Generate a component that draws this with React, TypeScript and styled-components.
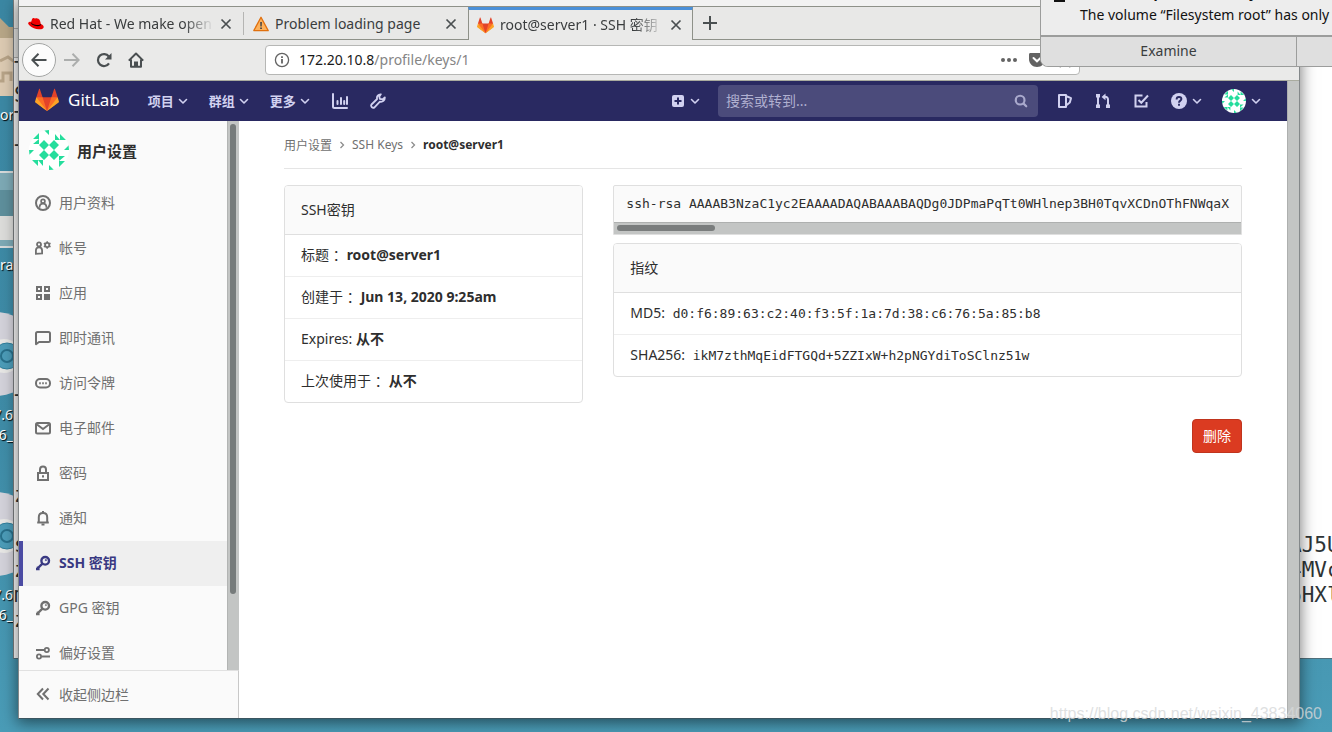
import React from "react";
import styled, { createGlobalStyle, css } from "styled-components";

const sans = `"Noto Sans", "Noto Sans CJK SC", sans-serif`;
const mono = `"DejaVu Sans Mono", monospace`;

const GlobalStyle = createGlobalStyle`
  *, *::before, *::after { box-sizing: border-box; }
  body { margin: 0; font-family: ${sans}; font-size: 14px; color: #2e2e2e; }
  button, input { font: inherit; color: inherit; margin: 0; padding: 0; border: 0; background: none; }
  a { color: inherit; text-decoration: none; }
  ul, ol, p { margin: 0; padding: 0; list-style: none; }
  svg { display: block; flex: none; }
`;

/* ---------- desktop ---------- */

const Desktop = styled.div`
  position: relative;
  height: 100vh;
  min-height: 600px;
  overflow: hidden;
  background: linear-gradient(#3b87a3, #3f8ca7 60%, #4a9cb7);
`;

const DesktopIcons = styled.ul`
  width: 13px;
  padding-top: 14px;
  overflow: hidden;
  color: #fff;
  font-size: 14px;
  line-height: 20px;
  text-shadow: 1px 1px 1px #000;
`;

const DesktopIcon = styled.li<{ $gap: number; $end?: boolean }>`
  display: flex;
  flex-direction: column;
  align-items: ${(p) => (p.$end ? "flex-end" : "flex-start")};
  height: ${(p) => p.$gap}px;
  text-align: right;
  white-space: pre;
`;

const Terminal = styled.section`
  position: absolute;
  top: 0;
  left: 13px;
  right: 0;
  bottom: 73px;
  overflow: hidden;
  background: #fff;
  border-left: 1px solid #7d8082;
  border-bottom: 1px solid #50707c;
  font-family: ${mono};
  font-size: 21px;
  line-height: 25px;
  color: #2e3436;
`;

const TerminalBar = styled.div`
  height: 29px;
  background: #ececea;
  border-bottom: 1px solid #b4b4b2;
`;

const TerminalRow = styled.div`
  display: flex;
  justify-content: space-between;
  height: 25px;
  white-space: pre;
`;

const TerminalEnd = styled.span`
  width: 43px;
  overflow: hidden;
`;

/* ---------- browser window ---------- */

const BrowserWindow = styled.section`
  position: absolute;
  top: 0;
  left: 18px;
  right: 32px;
  bottom: 13px;
  display: flex;
  flex-direction: column;
  background: #fff;
  border: 1px solid #84888a;
  border-top: 0;
  border-bottom-color: #3b5560;
  box-shadow: 0 3px 14px 1px rgba(0, 0, 0, 0.5);
`;

const TitleBar = styled.div`
  height: 7px;
  flex: none;
  background: #f2f2f2;
  border-bottom: 1px solid #8e9189;
`;

const TabBar = styled.div`
  display: flex;
  flex: none;
  height: 33px;
  background: #e8e8e7;
`;

const Tab = styled.div<{ $active?: boolean; $divider?: boolean }>`
  display: flex;
  align-items: center;
  gap: 6px;
  width: 225px;
  padding: 2px 12px 0 9px;
  color: #3a3d3e;
  border-bottom: 1px solid #8e9189;
  ${(p) =>
    p.$divider &&
    css`
      background: linear-gradient(#b5b5b3, #b5b5b3) right center / 1px 23px no-repeat;
    `}
  ${(p) =>
    p.$active &&
    css`
      margin-left: -1px;
      background: #eaeae9;
      border: 1px solid #8e9189;
      border-top: 3px solid #4a90d9;
      border-bottom: 0;
      padding: 0 10px 0 8px;
    `}
`;

const TabTitle = styled.span`
  flex: 1;
  overflow: hidden;
  white-space: nowrap;
  line-height: 22px;
  mask-image: linear-gradient(to right, #000 calc(100% - 30px), transparent);
`;

const TabTitlePlain = styled(TabTitle)`
  mask-image: none;
`;

const IconButton = styled.button`
  display: flex;
  align-items: center;
  justify-content: center;
  cursor: pointer;
  color: #4a4f51;
`;

const TabRest = styled.div`
  display: flex;
  flex: 1;
  padding-left: 9px;
  border-bottom: 1px solid #8e9189;
`;

const Toolbar = styled.div`
  display: flex;
  flex: none;
  align-items: center;
  height: 41px;
  padding: 0 219px 0 3px;
  background: #eaeae9;
  border-bottom: 1px solid #a9ab9f;
`;

const NavButtons = styled.div`
  display: flex;
  flex: 0 0 243px;
  align-items: center;
`;

const BackButton = styled(IconButton)`
  width: 34px;
  height: 34px;
  border: 1px solid #a3a5a4;
  border-radius: 17px;
  background: #fcfcfc;
`;

const NavButton = styled(IconButton)<{ $faded?: boolean }>`
  width: 32px;
  height: 32px;
  color: ${(p) => (p.$faded ? "#acaead" : "#4a4f51")};
`;

const AddressBar = styled.div`
  display: flex;
  flex: 1;
  align-items: center;
  height: 30px;
  padding: 0 6px 0 8px;
  background: #fff;
  border: 1px solid #b6b7b5;
  border-radius: 4px;
  color: #636363;
`;

const Host = styled.label`
  margin-left: 9px;
  padding-bottom: 2px;
  color: #1a1a1a;
`;

const PathInput = styled.input`
  flex: 1;
  min-width: 0;
  padding-bottom: 2px;
  color: #858585;
  outline: 0;
`;

const AddressActions = styled.div`
  display: flex;
  gap: 12px;
  align-items: center;
`;

/* ---------- GitLab page ---------- */

const Viewport = styled.div`
  display: flex;
  flex: 1;
  min-height: 0;
`;

const PageScrollbar = styled.div`
  flex: 0 0 12px;
  background: #c3c5c4;
  border-left: 1px solid #aeb0af;
`;

const Page = styled.div`
  display: flex;
  flex: 1;
  flex-direction: column;
  min-width: 0;
`;

const Navbar = styled.header`
  display: flex;
  flex: none;
  align-items: center;
  height: 40px;
  padding: 0 23px 0 16px;
  background: #292961;
  color: #d1d1f0;
`;

const Brand = styled.a`
  display: flex;
  align-items: center;
  gap: 9px;
  padding-bottom: 2px;
  color: #fff;
  font-size: 17px;
  line-height: 24px;
`;

const MainMenu = styled.nav`
  display: flex;
  flex: 1;
  align-items: center;
  margin-left: 28px;
`;

const MenuButton = styled.button`
  display: flex;
  align-items: center;
  gap: 1px;
  margin-right: 18px;
  font-size: 13px;
  font-weight: 700;
  line-height: 20px;
  white-space: nowrap;
  cursor: pointer;
`;

const MenuLink = styled.a`
  margin: 0 21px 0 1px;
`;

const SearchBox = styled.form`
  display: flex;
  align-items: center;
  width: 320px;
  height: 32px;
  margin-right: 19px;
  padding: 0 10px 0 8px;
  background: #4b4b7b;
  border-radius: 4px;
  color: #a9a9cc;
`;

const SearchInput = styled.input`
  flex: 1;
  min-width: 0;
  padding-bottom: 2px;
  outline: 0;
  &::placeholder {
    color: #b0b0d0;
    opacity: 1;
  }
`;

const ActionLinks = styled.div`
  display: flex;
  align-items: center;
  gap: 17px;
`;

const ActionLink = styled.a`
  margin-right: 5px;
`;

const DropButton = styled.button<{ $end?: number }>`
  display: flex;
  align-items: center;
  gap: 2px;
  margin-right: ${(p) => p.$end ?? 0}px;
  cursor: pointer;
`;

const Avatar = styled.span<{ $size: number }>`
  display: block;
  width: ${(p) => p.$size}px;
  height: ${(p) => p.$size}px;
  overflow: hidden;
  border-radius: 50%;
  background: #fff;
  flex: none;
`;

const Body = styled.div`
  display: flex;
  flex: 1;
  min-height: 0;
`;

const Sidebar = styled.aside`
  display: flex;
  flex: 0 0 220px;
  flex-direction: column;
  background: #fafafa;
  color: #707070;
`;

const SidebarScroll = styled.div`
  display: flex;
  flex: 1;
  min-height: 0;
`;

const SidebarList = styled.div`
  flex: 1;
  overflow: hidden;
`;

const SidebarTrack = styled.div`
  flex: 0 0 12px;
  padding: 3px 2px 0;
  background: #c3c5c4;
  border-left: 1px solid #b2b4b3;
`;

const SidebarThumb = styled.div`
  width: 6px;
  height: 86%;
  background: #767b7b;
  border-radius: 3px;
`;

const ContextTitle = styled.a`
  display: flex;
  align-items: center;
  gap: 8px;
  height: 60px;
  padding: 0 0 2px 10px;
  font-size: 15px;
  font-weight: 700;
  color: #2e2e2e;
`;

const SideLink = styled.a<{ $active?: boolean }>`
  display: flex;
  align-items: center;
  gap: 8px;
  height: 45px;
  padding: 0 0 2px 16px;
  line-height: 20px;
  ${(p) =>
    p.$active &&
    css`
      padding-left: 12px;
      border-left: 4px solid #4b4ba3;
      background: #efefef;
      color: #393982;
      font-weight: 700;
    `}
`;

const CollapseButton = styled.button`
  display: flex;
  flex: none;
  align-items: center;
  gap: 8px;
  height: 48px;
  padding: 0 0 2px 16px;
  border-top: 1px solid #e1e1e1;
  border-right: 1px solid #c8c8c8;
  cursor: pointer;
`;

const Content = styled.main`
  flex: 1;
  min-width: 0;
  overflow: hidden;
`;

const Container = styled.div`
  max-width: 990px;
  margin: 0 auto;
  padding: 0 16px;
`;

const Breadcrumbs = styled.ol`
  display: flex;
  align-items: center;
  gap: 6px;
  height: 48px;
  border-bottom: 1px solid #e5e5e5;
  font-size: 12px;
  color: #707070;
`;

const Crumb = styled.li<{ $current?: boolean }>`
  display: flex;
  align-items: center;
  gap: 6px;
  ${(p) =>
    p.$current &&
    css`
      color: #2e2e2e;
      font-weight: 700;
    `}
`;

const Columns = styled.div`
  display: grid;
  grid-template-columns: repeat(12, minmax(0, 1fr));
  gap: 30px;
  align-items: start;
  margin-top: 16px;
`;

const Column = styled.div<{ $span: number }>`
  display: flex;
  flex-direction: column;
  grid-column: span ${(p) => p.$span};
`;

const Card = styled.section`
  border: 1px solid #dfdfdf;
  border-radius: 4px;
  overflow: hidden;
  line-height: 21px;
`;

const CardHeader = styled.div`
  padding: 13px 16px 14px;
  background: #fafafa;
  border-bottom: 1px solid #dfdfdf;
`;

const CardRow = styled.li`
  padding: 9px 16px 11px;
  border-bottom: 1px solid #eee;
  white-space: pre;
  &:last-child {
    border-bottom: 0;
  }
`;

const Code = styled.code`
  margin-left: 4px;
  font-family: ${mono};
  font-size: 13px;
  line-height: 16px;
`;

const KeyBox = styled.div`
  margin-bottom: 8px;
  background: #fafafa;
  border: 1px solid #dfdfdf;
  border-radius: 2px 2px 0 0;
  overflow: hidden;
`;

const KeyText = styled.pre`
  margin: 0;
  padding: 8px 0 8px 12px;
  overflow: hidden;
  font-family: ${mono};
  font-size: 13px;
  line-height: 20px;
`;

const KeyTrack = styled.div`
  height: 12px;
  padding: 2px 3px;
  background: #c3c5c4;
  border-top: 1px solid #aeb0af;
`;

const KeyThumb = styled.div`
  width: 98px;
  height: 6px;
  border-radius: 3px;
  background: #7a7d7d;
`;

const DeleteButton = styled.button`
  align-self: flex-end;
  height: 34px;
  margin-top: 42px;
  padding: 0 10px 2px;
  background: #db3b21;
  border: 1px solid #c0341d;
  border-radius: 4px;
  color: #fff;
  cursor: pointer;
`;

/* ---------- overlays ---------- */

const Notification = styled.aside`
  position: absolute;
  top: -24px;
  right: 0;
  width: 292px;
  overflow: hidden;
  background: #ededed;
  border: 1px solid #9c9d9c;
  border-right: 0;
  border-radius: 0 0 0 8px;
  color: #111;
  white-space: nowrap;
`;

const NotificationBody = styled.div`
  display: flex;
  gap: 15px;
  height: 60px;
  padding: 5px 0 0 13px;
  border-bottom: 2px solid #9c9d9c;
  line-height: 22px;
`;

const NotificationTitle = styled.p`
  font-weight: 700;
`;

const NotificationButtons = styled.div`
  display: flex;
  height: 29px;
  background: #dfdfdf;
`;

const NotificationButton = styled.button`
  width: 256px;
  padding-bottom: 2px;
  border-right: 1px solid #9c9d9c;
  color: #3a3d3e;
`;

const Watermark = styled.p`
  position: absolute;
  right: 10px;
  bottom: 8px;
  font-family: "Liberation Sans", sans-serif;
  font-size: 16px;
  line-height: 20px;
  color: rgba(214, 216, 217, 0.8);
`;

/* ---------- drawings ---------- */

const Tanuki = ({ size }: { size: number }) => (
  <svg width={size} height={size} viewBox="0 0 36 36" aria-hidden="true">
    <path fill="#e24329" d="M2 14l9.38 9v-9l-4-12.28c-.205-.632-1.176-.632-1.38 0z" />
    <path fill="#e24329" d="M34 14l-9.38 9v-9l4-12.28c.205-.632 1.176-.632 1.38 0z" />
    <path fill="#e24329" d="M18 34.38L3 14h30z" />
    <path fill="#fc6d26" d="M18 34.38L11.38 14H2l4 11z" />
    <path fill="#fc6d26" d="M18 34.38L24.62 14H34l-4 11z" />
    <path fill="#fca326" d="M2 14L.1 20.16c-.18.565 0 1.2.5 1.56L18 34.38z" />
    <path fill="#fca326" d="M34 14l1.9 6.16c.18.565 0 1.2-.5 1.56L18 34.38z" />
  </svg>
);

const Identicon = ({ size }: { size: number }) => (
  <Avatar $size={size}>
    <svg width={size} height={size} viewBox="0 0 40 40" fill="#25dd9c" aria-hidden="true">
      <path d="M15 10l5 5-5 5-5-5zM25 10l5 5-5 5-5-5zM15 20l5 5-5 5-5-5zM25 20l5 5-5 5-5-5z" />
      {[0, 90, 180, 270].map((a) => (
        <path key={a} transform={`rotate(${a} 20 20)`} d="M15 0h5v5zM10 3v6H4zM10 9v5H4z" />
      ))}
    </svg>
  </Avatar>
);

const Chevron = () => (
  <svg width="16" height="16" viewBox="0 0 16 16" fill="none" stroke="currentColor" strokeWidth="1.6" strokeLinecap="round" strokeLinejoin="round" aria-hidden="true">
    <path d="M4.5 6.5L8 10l3.5-3.5" />
  </svg>
);

const Close = () => (
  <svg width="12" height="12" viewBox="0 0 12 12" fill="none" stroke="currentColor" strokeWidth="1.7" aria-hidden="true">
    <path d="M1.5 1.5l9 9M10.5 1.5l-9 9" />
  </svg>
);

const Sep = () => (
  <svg width="8" height="8" viewBox="0 0 8 8" fill="none" stroke="#8c8c8c" strokeWidth="1.3" aria-hidden="true">
    <path d="M2.5 1L5.5 4l-3 3" />
  </svg>
);

const RedHat = () => (
  <svg width="16" height="16" viewBox="0 0 16 16" aria-hidden="true">
    <path fill="#e00" d="M4 3.2c.5-1.2 1.6-1.3 2.6-.8 1 .3 1.5-.3 2.7 0 1.7.3 2.6 1.300 3 3.300l.5 2.300c1.6.6 2.9 1.7 2.9 3 0 1.8-2.300 2.600-5 2.300-3.200-.4-6.500-1.800-8.600-3.400C.6 8.800 0 7.800.2 7c.2-.9 1.400-1.400 3-1.300z" />
    <path d="M3.200 5.700c-.4 1.200 1.300 2.300 3.900 3 2.400.6 4.700.5 5.500-.7l.3 1.100c-.9 1.300-3.500 1.300-6.100.6C4 8.900 2.500 7.500 3.200 5.700z" />
  </svg>
);

const Warning = () => (
  <svg width="16" height="16" viewBox="0 0 16 16" aria-hidden="true">
    <path fill="#fdb25c" stroke="#e0700f" strokeWidth="1.3" strokeLinejoin="round" d="M8 1.200L15.200 14.600H.8z" />
    <path fill="#444" d="M7.200 6h1.700l-.2 4.600H7.400zM7.200 11.400h1.700v1.600H7.200z" />
  </svg>
);

const Line = ({ children, size = 16, width = 2 }: { children: React.ReactNode; size?: number; width?: number }) => (
  <svg width={size} height={size} viewBox="0 0 16 16" fill="none" stroke="currentColor" strokeWidth={width} aria-hidden="true">
    {children}
  </svg>
);

const KeyIcon = () => (
  <Line width={2.4}>
    <circle cx="10.2" cy="5.8" r="3.8" />
    <path d="M7.400 8.600L2 14M3 11.600v3.200M1 14h3.600" />
    <circle cx="10.900" cy="5.100" r=".6" strokeWidth="1" />
  </Line>
);

const sideItems: { label: string; icon: React.ReactNode; active?: boolean }[] = [
  {
    label: "用户资料",
    icon: (
      <Line>
        <circle cx="8" cy="8" r="7" />
        <circle cx="8" cy="6.3" r="1.9" strokeWidth="1.7" />
        <path strokeWidth="1.7" d="M4.600 12.800V12c0-2 1.500-3.400 3.400-3.400s3.400 1.400 3.400 3.400v.8" />
      </Line>
    ),
  },
  {
    label: "帐号",
    icon: (
      <Line width={1.8}>
        <circle cx="4" cy="4.4" r="2" />
        <path d="M.9 13.800V10.600C.9 8.600 2 7.300 4 7.300s3.100 1.300 3.100 3.300v2.900z" />
        <circle cx="12.2" cy="5" r="2.1" />
        <path strokeWidth="1.5" d="M12.200 1.200v1.700M12.200 7.100v1.700M8.900 3.100l1.500.9M14 6l1.500.9M8.900 6.900l1.500-.9M14 4l1.500-.9" />
      </Line>
    ),
  },
  {
    label: "应用",
    icon: (
      <Line>
        <path d="M2 2h4v4H2zM10 2h4v4h-4zM2 10h4v4H2z" />
        <path fill="currentColor" d="M10 10h4v4h-4z" />
      </Line>
    ),
  },
  {
    label: "即时通讯",
    icon: (
      <Line>
        <path strokeLinejoin="round" d="M1 14.200V3.500C1 2.600 1.600 2 2.500 2h11c.9 0 1.500.6 1.500 1.500v7c0 .9-.6 1.500-1.500 1.500H4z" />
      </Line>
    ),
  },
  {
    label: "访问令牌",
    icon: (
      <Line>
        <rect x="1" y="4" width="14" height="8.500" rx="4" />
        <path d="M4.200 8.200h1.600M7.200 8.200h1.600M10.200 8.200h1.600" />
      </Line>
    ),
  },
  {
    label: "电子邮件",
    icon: (
      <Line>
        <rect x="1" y="3" width="14" height="10.500" rx="1.500" />
        <path d="M2 4.500l6 4.500 6-4.500" />
      </Line>
    ),
  },
  {
    label: "密码",
    icon: (
      <Line>
        <rect x="3" y="8" width="10" height="7" />
        <path d="M5 8V4.500C5 2.600 6.200 1.500 8 1.500s3 1.100 3 3V8" />
        <path d="M8 10.200v2.200" />
      </Line>
    ),
  },
  {
    label: "通知",
    icon: (
      <Line>
        <path strokeLinejoin="round" d="M2.200 12.500h11.600M3.800 12V7.200C3.800 4.600 5.500 3 8 3s4.200 1.600 4.200 4.200V12" />
        <path d="M8 1v2M6.500 14.400h3" />
      </Line>
    ),
  },
  { label: "SSH 密钥", icon: <KeyIcon />, active: true },
  { label: "GPG 密钥", icon: <KeyIcon /> },
  {
    label: "偏好设置",
    icon: (
      <Line width={1.8}>
        <path d="M1 5h8M6.500 11.500H15" />
        <circle cx="11.800" cy="5" r="2.100" />
        <circle cx="4" cy="11.500" r="2.100" />
      </Line>
    ),
  },
];

const keyDetails = [
  { label: "标题 ：", value: "root@server1" },
  { label: "创建于 ：", value: "Jun 13, 2020 9:25am" },
  { label: "Expires: ", value: "从不" },
  { label: "上次使用于 ：", value: "从不" },
];

const fingerprints = [
  { label: "MD5: ", value: "d0:f6:89:63:c2:40:f3:5f:1a:7d:38:c6:76:5a:85:b8" },
  { label: "SHA256: ", value: "ikM7zthMqEidFTGQd+5ZZIxW+h2pNGYdiToSClnz51w" },
];

const terminalRows: [string, string?][] = [
  ["T"], ["S"], ["T"], ["+"], [""], [""], [""], [""], [""], [""], [""], [""], [""], ["+"],
  [""], [""], [""], ["z"], [""], ["s", "AJ5U"], ["z", "4MVc"], ["m", "6HXl"], ["z"],
];

const Folder = () => (
  <svg width="16" height="91" viewBox="0 0 16 91" aria-hidden="true">
    <path fill="#b7a687" d="M0 4l9 9h7v20H0z" />
    <path fill="#dccab2" d="M0 24h16v58H0z" />
    <path fill="none" stroke="#b7a387" strokeWidth="3" d="M0 47l8-4 8 6M0 67h3v-8h8v8" />
  </svg>
);

const Drive = () => (
  <svg width="16" height="91" viewBox="0 0 16 91" aria-hidden="true">
    <path fill="#7da9b5" stroke="#d6dadb" strokeWidth="2" d="M-2 8h16v75H-2z" />
    <path fill="#5e8f9c" d="M0 26h13v26H0z" />
    <path fill="#dcdcda" d="M0 52h13v24H0z" />
  </svg>
);

const Disc = () => (
  <svg width="13" height="97" viewBox="0 0 13 97" aria-hidden="true">
    <circle cx="-4" cy="46" r="42" fill="#d3d2da" />
    <circle cx="4" cy="48" r="17" fill="#e7e7e5" />
    <circle cx="7" cy="48" r="13" fill="#4c9cb8" stroke="#2f7e9b" />
    <circle cx="7" cy="48" r="6" fill="none" stroke="#286f8a" strokeWidth="2" />
  </svg>
);

export default function App() {
  return (
    <>
      <GlobalStyle />
      <Desktop>
        <DesktopIcons>
          <DesktopIcon $gap={150}><Folder />or</DesktopIcon>
          <DesktopIcon $gap={144}><Drive />ras</DesktopIcon>
          <DesktopIcon $gap={180} $end><Disc />7.6{"\n"}6_</DesktopIcon>
          <DesktopIcon $gap={140} $end><Disc />7.6{"\n"}6_</DesktopIcon>
        </DesktopIcons>

        <Terminal aria-label="Terminal">
          <TerminalBar />
          <TerminalBar />
          {terminalRows.map(([start, end], i) => (
            <TerminalRow key={i}>
              <span>{start}</span>
              {end && <TerminalEnd>{end}</TerminalEnd>}
            </TerminalRow>
          ))}
        </Terminal>

        <BrowserWindow aria-label="Browser">
          <TitleBar />
          <TabBar>
            <Tab $divider>
              <RedHat />
              <TabTitle>Red Hat - We make open source</TabTitle>
              <IconButton aria-label="Close tab"><Close /></IconButton>
            </Tab>
            <Tab>
              <Warning />
              <TabTitlePlain>Problem loading page</TabTitlePlain>
              <IconButton aria-label="Close tab"><Close /></IconButton>
            </Tab>
            <Tab $active>
              <Tanuki size={17} />
              <TabTitle>root@server1 · SSH 密钥</TabTitle>
              <IconButton aria-label="Close tab"><Close /></IconButton>
            </Tab>
            <TabRest>
              <IconButton aria-label="New tab">
                <Line><path d="M8 1v14M1 8h14" /></Line>
              </IconButton>
            </TabRest>
          </TabBar>

          <Toolbar>
            <NavButtons>
              <BackButton aria-label="Back">
                <Line><path d="M15.500 8H1.500M7.500 1.800L1.300 8l6.200 6.200" /></Line>
              </BackButton>
              <NavButton $faded aria-label="Forward">
                <Line><path d="M0 8h14.500M8.500 1.800L14.700 8l-6.200 6.200" /></Line>
              </NavButton>
              <NavButton aria-label="Reload">
                <Line>
                  <path strokeWidth="2.2" d="M13 11.300A6 6 0 1 1 12.800 4.500" />
                  <path fill="currentColor" stroke="none" d="M15.500 1v6.500H9z" />
                </Line>
              </NavButton>
              <NavButton aria-label="Home">
                <Line>
                  <path strokeLinejoin="round" d="M.8 8.600L8 1.500l7.200 7.100M3 7.500V14.800h10V7.500" />
                  <path fill="currentColor" stroke="none" d="M6 15V9.500h4V15z" />
                </Line>
              </NavButton>
            </NavButtons>
            <AddressBar>
              <Line width={1.3}>
                <circle cx="8" cy="8" r="6.6" />
                <path strokeWidth="1.8" d="M8 7v4.500M8 4.200v1.700" />
              </Line>
              <Host htmlFor="address">172.20.10.8</Host>
              <PathInput id="address" defaultValue="/profile/keys/1" />
              <AddressActions>
                <svg width="16" height="16" viewBox="0 0 16 16" fill="currentColor" aria-hidden="true">
                  <circle cx="2" cy="8" r="2" /><circle cx="8" cy="8" r="2" /><circle cx="14" cy="8" r="2" />
                </svg>
                <svg width="16" height="16" viewBox="0 0 16 16" aria-hidden="true">
                  <path fill="currentColor" d="M0 2.500C0 1.500.6 1 1.500 1h13c.9 0 1.500.5 1.500 1.500V7c0 4.500-3.500 8-8 8S0 11.500 0 7z" />
                  <path fill="none" stroke="#fff" strokeWidth="2" strokeLinecap="round" d="M4.500 6L8 9.300 11.500 6" />
                </svg>
                <Line width={1.5}>
                  <path d="M8 1.500l2 4.400 4.600.5-3.400 3.200 1 4.700L8 12l-4.200 2.300 1-4.700L1.400 6.400 6 5.900z" />
                </Line>
              </AddressActions>
            </AddressBar>
          </Toolbar>

          <Viewport>
            <Page>
              <Navbar>
                <Brand href="#"><Tanuki size={24} />GitLab</Brand>
                <MainMenu>
                  {["项目", "群组", "更多"].map((m) => (
                    <MenuButton key={m}>{m}<Chevron /></MenuButton>
                  ))}
                  <MenuLink href="#" aria-label="Analytics">
                    <Line><path strokeLinecap="round" d="M1 1v12.500c0 .8.500 1.500 1.500 1.500H15M5.500 8v3M9 5v6M12.200 8v3M15 4v7" /></Line>
                  </MenuLink>
                  <MenuLink href="#" aria-label="Admin area">
                    <Line width={1.8}>
                      <path strokeLinejoin="round" d="M10.800 1.300c-2.400-.2-4.400 2-3.700 4.700L1.500 11.500c-1.200 1.600.9 4.200 3 2.900l5.400-5.700c2.800.7 5-1.300 4.900-4.300l-2.300 2-2.700-.6-.5-2.200z" />
                    </Line>
                  </MenuLink>
                </MainMenu>
                <DropButton $end={15} aria-label="New">
                  <svg width="14" height="14" viewBox="0 0 14 14" aria-hidden="true">
                    <rect x="1" y="1" width="12" height="12" rx="2" fill="currentColor" />
                    <path stroke="#292961" strokeWidth="2" d="M7 3.500v7M3.500 7h7" />
                  </svg>
                  <Chevron />
                </DropButton>
                <SearchBox role="search">
                  <SearchInput aria-label="Search" placeholder="搜索或转到..." />
                  <Line size={14} width={2.5}>
                    <circle cx="7" cy="7" r="5" /><path strokeLinecap="round" d="M11 11l3 3" />
                  </Line>
                </SearchBox>
                <ActionLinks>
                  <ActionLink href="#" aria-label="Issues">
                    <Line><path strokeLinejoin="round" d="M2 2h7v12H2zM9 3l5 2.200-1.200 4.300L9 12.500" /></Line>
                  </ActionLink>
                  <ActionLink href="#" aria-label="Merge requests">
                    <Line>
                      <path d="M3 4v9M13 13V6.500C13 4.600 12 3.800 10 3.800H8" />
                      <path fill="currentColor" stroke="none" d="M10.500.5v6.800L6.600 3.900zM1 1h4v3.500H1zM1 11.500h4V15H1zM11 11.500h4V15h-4z" />
                    </Line>
                  </ActionLink>
                  <ActionLink href="#" aria-label="To-dos">
                    <Line><path d="M9.500 2.500h-7v11h11V9M5.500 7l2.800 2.800L15 2.500" /></Line>
                  </ActionLink>
                  <DropButton aria-label="Help">
                    <svg width="16" height="16" viewBox="0 0 16 16" aria-hidden="true">
                      <circle cx="8" cy="8" r="8" fill="currentColor" />
                      <path fill="none" stroke="#292961" strokeWidth="1.9" d="M5.600 6.400C5.600 4.800 6.600 4 8 4s2.400.8 2.400 2.100C10.400 7.700 8 7.600 8 9.700M8 10.700v2" />
                    </svg>
                    <Chevron />
                  </DropButton>
                  <DropButton aria-label="Account"><Identicon size={24} /><Chevron /></DropButton>
                </ActionLinks>
              </Navbar>

              <Body>
                <Sidebar>
                  <SidebarScroll>
                    <SidebarList>
                      <ContextTitle href="#"><Identicon size={40} />用户设置</ContextTitle>
                      <nav>
                        {sideItems.map((it) => (
                          <SideLink key={it.label} href="#" $active={it.active}>
                            {it.icon}
                            {it.label}
                          </SideLink>
                        ))}
                      </nav>
                    </SidebarList>
                    <SidebarTrack><SidebarThumb /></SidebarTrack>
                  </SidebarScroll>
                  <CollapseButton>
                    <Line><path d="M8 2.500L2.800 8 8 13.500M13.500 2.500L8.300 8l5.200 5.500" /></Line>
                    收起侧边栏
                  </CollapseButton>
                </Sidebar>

                <Content>
                  <Container>
                    <Breadcrumbs>
                      <Crumb><a href="#">用户设置</a><Sep /></Crumb>
                      <Crumb><a href="#">SSH Keys</a><Sep /></Crumb>
                      <Crumb $current><a href="#">root@server1</a></Crumb>
                    </Breadcrumbs>
                    <Columns>
                      <Column $span={4}>
                        <Card>
                          <CardHeader>SSH密钥</CardHeader>
                          <ul>
                            {keyDetails.map((d) => (
                              <CardRow key={d.label}>{d.label}<strong>{d.value}</strong></CardRow>
                            ))}
                          </ul>
                        </Card>
                      </Column>
                      <Column $span={8}>
                        <KeyBox>
                          <KeyText>ssh-rsa AAAAB3NzaC1yc2EAAAADAQABAAABAQDg0JDPmaPqTt0WHlnep3BH0TqvXCDnOThFNWqaX</KeyText>
                          <KeyTrack><KeyThumb /></KeyTrack>
                        </KeyBox>
                        <Card>
                          <CardHeader>指纹</CardHeader>
                          <ul>
                            {fingerprints.map((f) => (
                              <CardRow key={f.label}>{f.label}<Code>{f.value}</Code></CardRow>
                            ))}
                          </ul>
                        </Card>
                        <DeleteButton>删除</DeleteButton>
                      </Column>
                    </Columns>
                  </Container>
                </Content>
              </Body>
            </Page>
            <PageScrollbar />
          </Viewport>
        </BrowserWindow>

        <Notification>
          <NotificationBody>
            <svg width="11" height="20" viewBox="0 0 11 20" aria-hidden="true">
              <rect y="4" width="11" height="16" fill="#111" />
            </svg>
            <div>
              <NotificationTitle>Low Disk Space on “Filesystem root”</NotificationTitle>
              <p>The volume “Filesystem root” has only 3</p>
            </div>
          </NotificationBody>
          <NotificationButtons>
            <NotificationButton>Examine</NotificationButton>
          </NotificationButtons>
        </Notification>

        <Watermark>https://blog.csdn.net/weixin_43834060</Watermark>
      </Desktop>
    </>
  );
}
